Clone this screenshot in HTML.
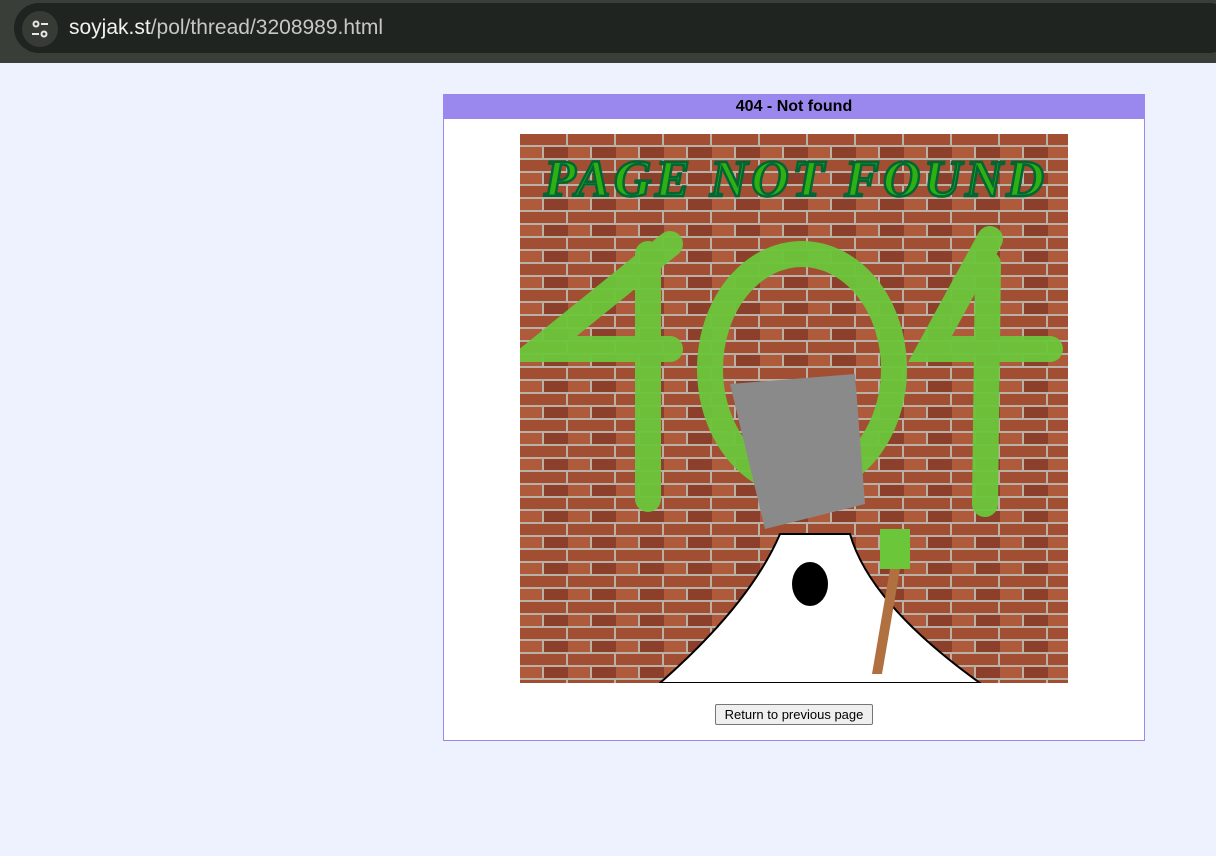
<!DOCTYPE html>
<html><head><meta charset="utf-8"><style>
*{margin:0;padding:0;box-sizing:border-box}
body{width:1216px;height:856px;background:#eef2ff;font-family:"Liberation Sans",Arial,sans-serif;position:relative;overflow:hidden}
#bar{position:absolute;left:0;top:0;width:1216px;height:63px;background:#3a3e38}
#pill{position:absolute;left:14px;top:3px;width:1220px;height:50px;border-radius:25px;background:#202420}
#ic{position:absolute;left:22px;top:11px;width:36px;height:36px;border-radius:18px;background:#373b36}
#url{position:absolute;left:69px;top:16px;font-size:21px;color:#c5c8c3}
#url b{font-weight:normal;color:#f0f2ee}
#box{position:absolute;left:443px;top:94px;width:702px;height:647px;background:#fff;border:1px solid #9b88ee}
#hd{height:24px;background:#9b88ee;text-align:center;font-weight:bold;font-size:16px;line-height:24px;color:#000}
#img{position:absolute;left:76px;top:39px;width:548px;height:549px;overflow:hidden;background:#9a4a30}
#btn{position:absolute;left:271px;top:609px;width:158px;height:21px;border:1px solid #767676;border-radius:2px;background:#efefef;font-size:13px;text-align:center;line-height:19px;font-family:"Liberation Sans",Arial,sans-serif}
</style></head><body>
<div id="bar"><div id="pill"></div>
<div id="ic"><svg width="36" height="36" viewBox="0 0 36 36" fill="none" stroke="#e6e8e4" stroke-width="2"><circle cx="14" cy="13" r="2.5"/><line x1="19" y1="13" x2="26" y2="13"/><line x1="10" y1="23" x2="17" y2="23"/><circle cx="22" cy="23" r="2.5"/></svg></div>
<div id="url"><b>soyjak.st</b>/pol/thread/3208989.html</div></div>
<div id="box"><div id="hd">404 - Not found</div>
<div id="img"><svg width="548" height="549" viewBox="0 0 548 549">
<defs><pattern id="br" width="48" height="26" patternUnits="userSpaceOnUse">
<rect width="48" height="26" fill="#b9b0a6"/>
<rect x="0" y="0" width="46" height="11" fill="#a24e33"/>
<rect x="24" y="13" width="46" height="11" fill="#8c3f2a"/>
<rect x="-24" y="13" width="46" height="11" fill="#b05a3c"/>
</pattern></defs>
<rect width="548" height="549" fill="url(#br)"/>
<text x="274" y="62" text-anchor="middle" font-family="Liberation Serif,serif" font-style="italic" font-weight="bold" font-size="52" fill="#2fb012" stroke="#063" stroke-width="2.5" textLength="500">PAGE NOT FOUND</text>
<g fill="none" stroke="#6cc63a" stroke-width="26" stroke-linecap="round" opacity="0.95">
<path d="M150 110 L20 215 L150 215 M128 120 L128 365"/>
<ellipse cx="282" cy="235" rx="92" ry="115"/>
<path d="M470 105 L410 215 L530 215 M468 130 L465 370"/>
</g>
<path d="M210 250 L335 240 L345 370 L245 395 Z" fill="#8a8a8a"/>
<path d="M140 549 Q230 470 260 400 L330 400 Q350 470 460 549 Z" fill="#fff" stroke="#000" stroke-width="2"/>
<ellipse cx="290" cy="450" rx="18" ry="22" fill="#000"/>
<rect x="360" y="395" width="30" height="40" fill="#6cc63a"/>
<path d="M370 435 L380 435 L362 540 L352 540Z" fill="#b07040"/>
</svg></div>
<div id="btn">Return to previous page</div>
</div>
</body></html>
